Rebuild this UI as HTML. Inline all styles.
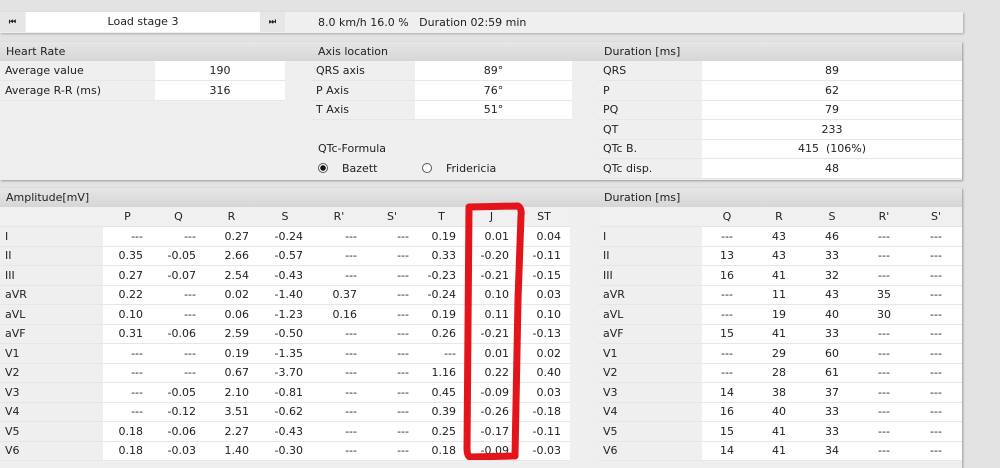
<!DOCTYPE html>
<html><head><meta charset="utf-8"><style>
*{margin:0;padding:0;box-sizing:border-box}
body{width:1000px;height:460px;background:#e3e3e3;font-family:"DejaVu Sans","Liberation Sans",sans-serif;font-size:11px;color:#222;position:relative;overflow:hidden}
.abs{position:absolute}
.bar{left:0;top:12px;width:963px;height:21px;background:#efefef;box-shadow:1px 1px 2px #aaa}
.btn{top:0;width:25px;height:20px;background:#e6e6e6;font-size:8px;text-align:center;line-height:20px;font-weight:bold}
.panel{left:0;width:962px;background:#efefef;box-shadow:1px 1px 2px #999}
.hdr{left:0;width:962px;height:19px;background:linear-gradient(#e6e6e6,#d6d6d6);}
.t{position:absolute;line-height:19px;white-space:nowrap}
.w{background:#fff}
table{position:absolute;border-collapse:collapse;table-layout:fixed}
td{height:19.5px;border-bottom:1.5px solid #e6e6e6;padding:0 9px 0 0;text-align:right;white-space:nowrap;overflow:hidden}
td.l{text-align:left;padding-left:5px;background:#efefef}
tr.h td{background:#f0f0f0;text-align:center;padding:0}
td.v{background:#fff}
.r td.v{text-align:center;padding:0}
</style></head><body>
<div class="abs bar">
 <div class="abs btn" style="left:0">⏮</div>
 <div class="abs w" style="left:26px;top:0;width:234px;height:20px;text-align:center;line-height:20px">Load stage 3</div>
 <div class="abs btn" style="left:260px">⏭</div>
 <div class="t" style="left:318px;top:1px">8.0 km/h 16.0 %&nbsp;&nbsp; Duration 02:59 min</div>
</div>

<div class="abs panel" style="top:42px;height:138px">
 <div class="abs hdr" style="top:0"></div>
 <div class="t" style="left:6px;top:0">Heart Rate</div>
 <div class="t" style="left:318px;top:0">Axis location</div>
 <div class="t" style="left:604px;top:0">Duration [ms]</div>
 <table style="left:0;top:19px;width:285px"><colgroup><col style="width:155px"><col></colgroup>
  <tr><td class="l">Average value</td><td class="v" style="text-align:center;padding:0">190</td></tr>
  <tr><td class="l">Average R-R (ms)</td><td class="v" style="text-align:center;padding:0">316</td></tr>
 </table>
 <table style="left:311px;top:19px;width:261px"><colgroup><col style="width:104px"><col></colgroup>
  <tr><td class="l">QRS axis</td><td class="v" style="text-align:center;padding:0">89°</td></tr>
  <tr><td class="l">P Axis</td><td class="v" style="text-align:center;padding:0">76°</td></tr>
  <tr><td class="l">T Axis</td><td class="v" style="text-align:center;padding:0">51°</td></tr>
 </table>
 <div class="t" style="left:318px;top:97px">QTc-Formula</div>
 <div class="t" style="left:318px;top:117px"><span style="display:inline-block;width:10px;height:10px;border:1px solid #555;border-radius:50%;vertical-align:-1px;background:radial-gradient(#111 0 2.5px,#fff 3px)"></span>&nbsp;&nbsp;&nbsp; Bazett</div>
 <div class="t" style="left:422px;top:117px"><span style="display:inline-block;width:10px;height:10px;border:1px solid #555;border-radius:50%;vertical-align:-1px;background:#fff"></span>&nbsp;&nbsp;&nbsp; Fridericia</div>
 <table style="left:598px;top:19px;width:364px"><colgroup><col style="width:104px"><col></colgroup>
  <tr><td class="l">QRS</td><td class="v" style="text-align:center;padding:0">89</td></tr>
  <tr><td class="l">P</td><td class="v" style="text-align:center;padding:0">62</td></tr>
  <tr><td class="l">PQ</td><td class="v" style="text-align:center;padding:0">79</td></tr>
  <tr><td class="l">QT</td><td class="v" style="text-align:center;padding:0">233</td></tr>
  <tr><td class="l">QTc B.</td><td class="v" style="text-align:center;padding:0">415&nbsp; (106%)</td></tr>
  <tr><td class="l">QTc disp.</td><td class="v" style="text-align:center;padding:0">48</td></tr>
 </table>
</div>

<div class="abs panel" style="top:188px;height:280px">
 <div class="abs hdr" style="top:0"></div>
 <div class="t" style="left:6px;top:0">Amplitude[mV]</div>
 <div class="t" style="left:604px;top:0">Duration [ms]</div>
 <table style="left:0;top:19px;width:570px"><colgroup><col style="width:103px"><col style="width:49px"><col style="width:53px"><col style="width:53px"><col style="width:54px"><col style="width:54px"><col style="width:52px"><col style="width:47px"><col style="width:53px"><col style="width:52px"></colgroup>
  <tr class="h"><td class="l"></td><td>P</td><td>Q</td><td>R</td><td>S</td><td>R'</td><td>S'</td><td>T</td><td>J</td><td>ST</td></tr>
  <tr><td class="l">I</td><td class="v">---</td><td class="v">---</td><td class="v">0.27</td><td class="v">-0.24</td><td class="v">---</td><td class="v">---</td><td class="v">0.19</td><td class="v">0.01</td><td class="v">0.04</td></tr>
  <tr><td class="l">II</td><td class="v">0.35</td><td class="v">-0.05</td><td class="v">2.66</td><td class="v">-0.57</td><td class="v">---</td><td class="v">---</td><td class="v">0.33</td><td class="v">-0.20</td><td class="v">-0.11</td></tr>
  <tr><td class="l">III</td><td class="v">0.27</td><td class="v">-0.07</td><td class="v">2.54</td><td class="v">-0.43</td><td class="v">---</td><td class="v">---</td><td class="v">-0.23</td><td class="v">-0.21</td><td class="v">-0.15</td></tr>
  <tr><td class="l">aVR</td><td class="v">0.22</td><td class="v">---</td><td class="v">0.02</td><td class="v">-1.40</td><td class="v">0.37</td><td class="v">---</td><td class="v">-0.24</td><td class="v">0.10</td><td class="v">0.03</td></tr>
  <tr><td class="l">aVL</td><td class="v">0.10</td><td class="v">---</td><td class="v">0.06</td><td class="v">-1.23</td><td class="v">0.16</td><td class="v">---</td><td class="v">0.19</td><td class="v">0.11</td><td class="v">0.10</td></tr>
  <tr><td class="l">aVF</td><td class="v">0.31</td><td class="v">-0.06</td><td class="v">2.59</td><td class="v">-0.50</td><td class="v">---</td><td class="v">---</td><td class="v">0.26</td><td class="v">-0.21</td><td class="v">-0.13</td></tr>
  <tr><td class="l">V1</td><td class="v">---</td><td class="v">---</td><td class="v">0.19</td><td class="v">-1.35</td><td class="v">---</td><td class="v">---</td><td class="v">---</td><td class="v">0.01</td><td class="v">0.02</td></tr>
  <tr><td class="l">V2</td><td class="v">---</td><td class="v">---</td><td class="v">0.67</td><td class="v">-3.70</td><td class="v">---</td><td class="v">---</td><td class="v">1.16</td><td class="v">0.22</td><td class="v">0.40</td></tr>
  <tr><td class="l">V3</td><td class="v">---</td><td class="v">-0.05</td><td class="v">2.10</td><td class="v">-0.81</td><td class="v">---</td><td class="v">---</td><td class="v">0.45</td><td class="v">-0.09</td><td class="v">0.03</td></tr>
  <tr><td class="l">V4</td><td class="v">---</td><td class="v">-0.12</td><td class="v">3.51</td><td class="v">-0.62</td><td class="v">---</td><td class="v">---</td><td class="v">0.39</td><td class="v">-0.26</td><td class="v">-0.18</td></tr>
  <tr><td class="l">V5</td><td class="v">0.18</td><td class="v">-0.06</td><td class="v">2.27</td><td class="v">-0.43</td><td class="v">---</td><td class="v">---</td><td class="v">0.25</td><td class="v">-0.17</td><td class="v">-0.11</td></tr>
  <tr><td class="l">V6</td><td class="v">0.18</td><td class="v">-0.03</td><td class="v">1.40</td><td class="v">-0.30</td><td class="v">---</td><td class="v">---</td><td class="v">0.18</td><td class="v">-0.09</td><td class="v">-0.03</td></tr>
 </table>
 <table class="r" style="left:598px;top:19px;width:364px"><colgroup><col style="width:104px"><col style="width:50px"><col style="width:54px"><col style="width:52px"><col style="width:52px"><col style="width:52px"></colgroup>
  <tr class="h"><td class="l"></td><td>Q</td><td>R</td><td>S</td><td>R'</td><td>S'</td></tr>
  <tr><td class="l">I</td><td class="v">---</td><td class="v">43</td><td class="v">46</td><td class="v">---</td><td class="v">---</td></tr>
  <tr><td class="l">II</td><td class="v">13</td><td class="v">43</td><td class="v">33</td><td class="v">---</td><td class="v">---</td></tr>
  <tr><td class="l">III</td><td class="v">16</td><td class="v">41</td><td class="v">32</td><td class="v">---</td><td class="v">---</td></tr>
  <tr><td class="l">aVR</td><td class="v">---</td><td class="v">11</td><td class="v">43</td><td class="v">35</td><td class="v">---</td></tr>
  <tr><td class="l">aVL</td><td class="v">---</td><td class="v">19</td><td class="v">40</td><td class="v">30</td><td class="v">---</td></tr>
  <tr><td class="l">aVF</td><td class="v">15</td><td class="v">41</td><td class="v">33</td><td class="v">---</td><td class="v">---</td></tr>
  <tr><td class="l">V1</td><td class="v">---</td><td class="v">29</td><td class="v">60</td><td class="v">---</td><td class="v">---</td></tr>
  <tr><td class="l">V2</td><td class="v">---</td><td class="v">28</td><td class="v">61</td><td class="v">---</td><td class="v">---</td></tr>
  <tr><td class="l">V3</td><td class="v">14</td><td class="v">38</td><td class="v">37</td><td class="v">---</td><td class="v">---</td></tr>
  <tr><td class="l">V4</td><td class="v">16</td><td class="v">40</td><td class="v">33</td><td class="v">---</td><td class="v">---</td></tr>
  <tr><td class="l">V5</td><td class="v">15</td><td class="v">41</td><td class="v">33</td><td class="v">---</td><td class="v">---</td></tr>
  <tr><td class="l">V6</td><td class="v">14</td><td class="v">41</td><td class="v">34</td><td class="v">---</td><td class="v">---</td></tr>
 </table>
</div>

<svg class="abs" style="left:0;top:0" width="1000" height="460">
 <path d="M469 207 L518 206 Q522 208 521 216 L518 300 L515 456 L470 457 Q467 456 467 448 L469 207 Z" fill="none" stroke="#e3141a" stroke-width="7" stroke-linejoin="round"/>
</svg>
</body></html>
